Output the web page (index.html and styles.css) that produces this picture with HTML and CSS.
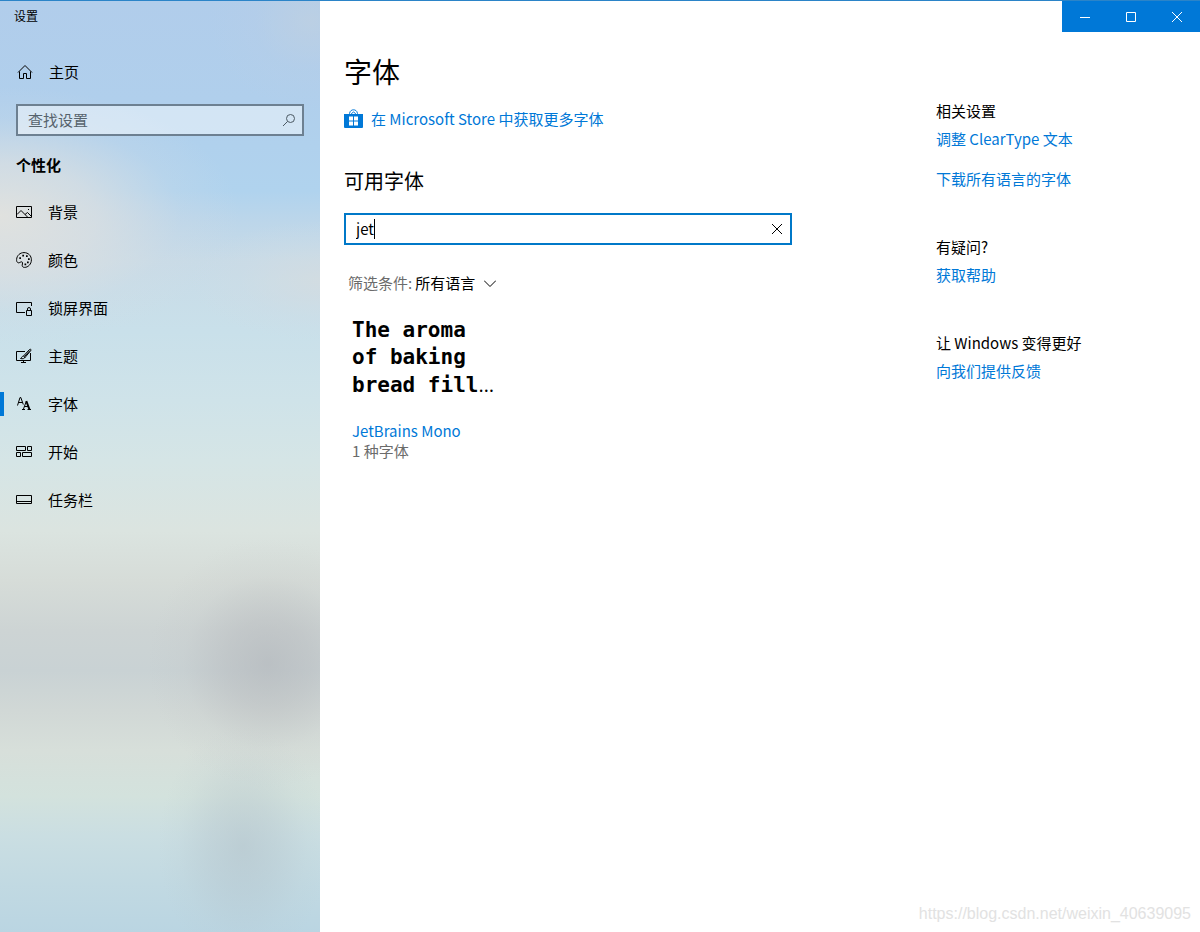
FILE: index.html
```html
<!DOCTYPE html>
<html lang="zh-CN">
<head>
<meta charset="utf-8">
<meta name="viewport" content="width=device-width, initial-scale=1">
<title>设置</title>
<link rel="stylesheet" href="styles.css">
</head>
<body>
<div class="window">
  <aside class="sidebar">
    <div class="app-title">设置</div>
    <a class="nav-link home" href="#home">
      <svg class="icon" viewBox="0 0 16 16"><path d="M1 8.500 8 1.500l7 7M2.500 7.500v7h4v-5h3v5h4v-7"/></svg>
      <span>主页</span>
    </a>
    <form class="search">
      <input class="search-input" type="text" placeholder="查找设置" aria-label="查找设置">
      <button class="search-button" type="button" aria-label="搜索">
        <svg class="icon-search" viewBox="0 0 14 14"><circle cx="8.500" cy="5.500" r="4"/><path d="M5.500 8.500 1 13"/></svg>
      </button>
    </form>
    <h2 class="nav-heading">个性化</h2>
    <nav class="nav">
      <a class="nav-link" href="#background">
        <svg class="icon" viewBox="0 0 16 16"><path d="M.5 2.500h15v11H.5zM1 10.500l4-4 6.500 6.500M9 10.500l2.500-2 4 4"/><path class="dot" d="M12 5h1v1h-1z"/></svg>
        <span>背景</span>
      </a>
      <a class="nav-link" href="#colors">
        <svg class="icon" viewBox="0 0 16 16"><path d="M.6 7.500C.8 3.500 4 .6 8 .6c4.300 0 7.400 3.200 7.400 7.200 0 4.400-3.300 7.600-6.900 7.600-2.200 0-2.700-1.600-2.100-3.400.5-1.700-.3-2.600-1.600-2-1.500.7-2.200 1.300-3.300.4C.7 9.700.5 8.700.6 7.500z"/><path class="dot" d="M3.300 5.300h1.700V7H3.300zM6.300 2.800H8v1.700H6.300zM10 3.300h1.700V5H10zM12 6.300h1.700V8H12zM11 9.500h1.700v1.700H11zM8.500 11.500h1.700v1.700H8.500z"/></svg>
        <span>颜色</span>
      </a>
      <a class="nav-link" href="#lockscreen">
        <svg class="icon" viewBox="0 0 16 16"><path d="M9 12.500H.5v-10h15V6M10.500 10.500h5v5h-5zM11.500 10.500V9a1.500 1.500 0 0 1 3 0v1.500"/></svg>
        <span>锁屏界面</span>
      </a>
      <a class="nav-link" href="#themes">
        <svg class="icon" viewBox="0 0 16 16"><path d="M9 3.500H.5v9h14V5M7.500 12.500v2M5 14.500h5M7.500 8l6-6.500c1-.8 2 .1 1.200 1.200L9 9.500zM7.500 8C6 8 6 9.500 4.500 10.500c2 .6 4.300.2 4.500-1.500M8.500 8.500l5.500-6"/></svg>
        <span>主题</span>
      </a>
      <a class="nav-link current" href="#fonts" aria-current="page">
        <svg class="icon" viewBox="0 0 16 16"><path d="M1.500 9.500l2.500-8h.8l2.500 7M2.500 6.500h4M6 13.500h3M7.300 13.500l2.900-8h.6M8.500 10.500h4M11.500 13.500H15"/><path class="stem" d="m10.300 5 3.200 8.500"/></svg>
        <span>字体</span>
      </a>
      <a class="nav-link" href="#start">
        <svg class="icon" viewBox="0 0 16 16"><path d="M.5 2.500h9v4h-9zM11.500 2.500h4v4h-4zM.5 8.500h4v4h-4zM6.500 8.500h9v4h-9z"/></svg>
        <span>开始</span>
      </a>
      <a class="nav-link" href="#taskbar">
        <svg class="icon" viewBox="0 0 16 16"><path d="M.5 3.500h15v8H.5zM.5 9.500h15"/></svg>
        <span>任务栏</span>
      </a>
    </nav>
  </aside>

  <div class="page">
    <header class="caption">
      <button class="caption-button" type="button" aria-label="最小化"><svg class="caption-icon" viewBox="0 0 10 10"><path d="M0 5.500h10"/></svg></button>
      <button class="caption-button" type="button" aria-label="最大化"><svg class="caption-icon" viewBox="0 0 10 10"><path d="M.5.5h9v9h-9z"/></svg></button>
      <button class="caption-button" type="button" aria-label="关闭"><svg class="caption-icon" viewBox="0 0 10 10"><path d="m0 0 10 10M10 0 0 10"/></svg></button>
    </header>
    <div class="columns">
      <main class="content">
        <h1 class="title">字体</h1>
        <a class="store-link" href="#store">
          <svg class="store-icon" viewBox="0 0 19 20"><path class="bag" d="M0 5h19v13q0 1-1 1H1q-1 0-1-1z"/><path class="handle" d="M5.500 6V4.500C6 1.500 8 .8 9.500.8s3.500.7 4 3.700V6M7.500 6V4.500q2-3 4 0V6"/><path class="panes" d="M5 7.500h4v4H5zM10 7.500h4v4h-4zM5 12.500h4v4H5zM10 12.500h4v4h-4z"/></svg>
          <span>在 Microsoft Store 中获取更多字体</span>
        </a>
        <h2 class="subtitle">可用字体</h2>
        <div class="font-search">
          <input class="font-input" type="text" value="jet" aria-label="搜索可用字体">
          <span class="caret"></span>
          <button class="clear-button" type="button" aria-label="清除"><svg class="caption-icon" viewBox="0 0 10 10"><path d="m0 0 10 10M10 0 0 10"/></svg></button>
        </div>
        <div class="filter">
          <label class="filter-label" for="language">筛选条件:</label>
          <select class="filter-select" id="language"><option>所有语言</option></select>
          <svg class="chevron" viewBox="0 0 12 7"><path d="m0 .5 6 6 6-6"/></svg>
        </div>
        <article class="font-card">
          <p class="preview">The aroma<br>of baking<br>bread fill<span class="ellipsis">…</span></p>
          <a class="font-name" href="#jetbrains-mono">JetBrains Mono</a>
          <p class="font-count">1 种字体</p>
        </article>
      </main>
      <aside class="related">
        <section class="related-group">
          <h3 class="related-title">相关设置</h3>
          <a class="related-link" href="#cleartype">调整 ClearType 文本</a>
          <a class="related-link" href="#download">下载所有语言的字体</a>
        </section>
        <section class="related-group">
          <h3 class="related-title">有疑问?</h3>
          <a class="related-link" href="#help">获取帮助</a>
        </section>
        <section class="related-group">
          <h3 class="related-title">让 Windows 变得更好</h3>
          <a class="related-link" href="#feedback">向我们提供反馈</a>
        </section>
      </aside>
    </div>
  </div>
  <div class="watermark">https://blog.csdn.net/weixin_40639095</div>
</div>
</body>
</html>
```
FILE: styles.css
```css
* { box-sizing: border-box; }

body {
  margin: 0;
  font-family: "Noto Sans CJK SC", sans-serif;
  font-size: 15px;
  line-height: 20px;
  color: #000;
  background: #fff;
}

h1, h2, h3, p { margin: 0; font-weight: 400; }
a { color: #0078d7; text-decoration: none; }
button, input, select { font: inherit; color: inherit; border: 0; padding: 0; background: none; border-radius: 0; }
svg { display: block; flex: none; fill: none; stroke: currentColor; }

.window {
  position: relative;
  display: flex;
  min-height: 100vh;
  border-top: 1px solid #2b84c8;
}

/* Sidebar */
.sidebar {
  flex: 0 0 320px;
  background:
    radial-gradient(ellipse 120px 125px at 268px 662px, rgba(174, 177, 182, .55), rgba(178, 180, 184, .38) 35%, rgba(190, 192, 194, .12) 70%, transparent),
    radial-gradient(ellipse 85px 120px at 243px 845px, rgba(176, 190, 198, .5), rgba(178, 192, 200, .32) 40%, rgba(184, 198, 204, .1) 75%, transparent),
    radial-gradient(ellipse 240px 130px at 0 215px, rgba(226, 226, 222, .95), rgba(222, 224, 224, .7) 40%, rgba(212, 220, 228, .2) 75%, transparent),
    radial-gradient(ellipse 130px 60px at 320px 280px, rgba(212, 220, 224, .8), rgba(208, 220, 228, .3) 60%, transparent),
    radial-gradient(ellipse 100px 90px at 310px 20px, rgba(190, 208, 226, .8), rgba(184, 206, 230, .3) 55%, transparent),
    linear-gradient(#b1cdeb 0, #b0cfec 100px, #b0d3ee 190px, #bcd6ea 220px, #c8dbe7 260px, #c9e0ea 330px, #cfe3e9 400px, #d5e5e6 460px, #dbe4e0 530px, #d6dcd8 580px, #cdd4d4 630px, #c9d2d4 670px, #d1d8d6 710px, #d7dfda 750px, #d3e2dd 795px, #cadee2 835px, #c1d9e2 885px, #bad5e2 932px);
}

.app-title { padding: 5px 14px 0; height: 47px; font-size: 12px; }

.nav-link {
  display: flex;
  align-items: center;
  gap: 16px;
  height: 48px;
  padding-left: 16px;
  color: #000;
}
.home { padding-left: 17px; }
.icon { width: 16px; height: 16px; }
.dot { fill: currentColor; stroke: none; }
.stem { stroke-width: 2; }
.current { border-left: 4px solid transparent; padding-left: 12px; background: linear-gradient(#0078d7, #0078d7) left center / 4px 24px no-repeat border-box; }

.search {
  display: flex;
  align-items: center;
  height: 32px;
  margin: 8px 16px 0;
  border: 2px solid #6d8091;
  background: rgba(255, 255, 255, .45);
}
.search-input { flex: 1; min-width: 0; padding-left: 10px; outline: 0; }
.search-input::placeholder { color: #56636d; opacity: 1; }
.search-button { padding: 0 6px; color: #4b5963; }
.icon-search { width: 14px; height: 14px; }

.nav-heading { height: 52px; padding: 19px 16px 0; font-size: 15px; font-weight: 700; }

/* Page */
.page { flex: 1; min-width: 0; }
.caption { display: flex; justify-content: flex-end; height: 31px; }
.caption-button { display: grid; place-items: center; width: 46px; background: #0078d7; color: #fff; }
.caption-icon { width: 10px; height: 10px; }

.columns {
  display: grid;
  grid-template-columns: minmax(0, 448px) minmax(0, 1fr);
  column-gap: 144px;
  padding: 19px 24px 0;
}

.title { font-size: 28px; line-height: 40px; }
.store-link { display: flex; align-items: center; gap: 8px; margin-top: 18px; }
.store-icon { width: 19px; height: 20px; }
.bag { fill: #0078d7; stroke: none; }
.handle { stroke: #0078d7; }
.panes { fill: #fff; stroke: none; }
.subtitle { margin-top: 36px; font-size: 20px; line-height: 32px; }

.font-search {
  display: flex;
  align-items: center;
  height: 32px;
  margin-top: 16px;
  border: 2px solid #0078c8;
}
.font-input { field-sizing: content; padding-left: 10px; outline: 0; }
.caret { width: 1px; height: 20px; background: #000; }
.clear-button { margin-left: auto; padding: 8px; }

.filter { display: flex; align-items: center; gap: 3px; margin: 28px 0 0 4px; }
.filter-label { color: #6b6b6b; }
.filter-select { appearance: none; outline: 0; }
.chevron { width: 12px; height: 7px; margin-left: 5px; }

.font-card { padding: 24px 8px 0; }
.preview { font-family: "DejaVu Sans Mono", monospace; font-size: 21px; font-weight: 700; line-height: 27px; }
.ellipsis { font-family: "Open Sans", sans-serif; font-size: 20px; font-weight: 400; }
.font-name { display: block; margin-top: 22px; }
.font-count { color: #6b6b6b; }

.related { padding-top: 50px; }
.related-group { margin-bottom: 48px; }
.related-title { font-size: 15px; margin-bottom: 8px; }
.related-link { display: block; margin-bottom: 20px; }
.related-link:last-child { margin-bottom: 0; }

.watermark {
  position: absolute;
  right: 9px;
  bottom: 8px;
  font-family: "Liberation Sans", sans-serif;
  font-size: 16px;
  color: #e2e2e2;
}
```
